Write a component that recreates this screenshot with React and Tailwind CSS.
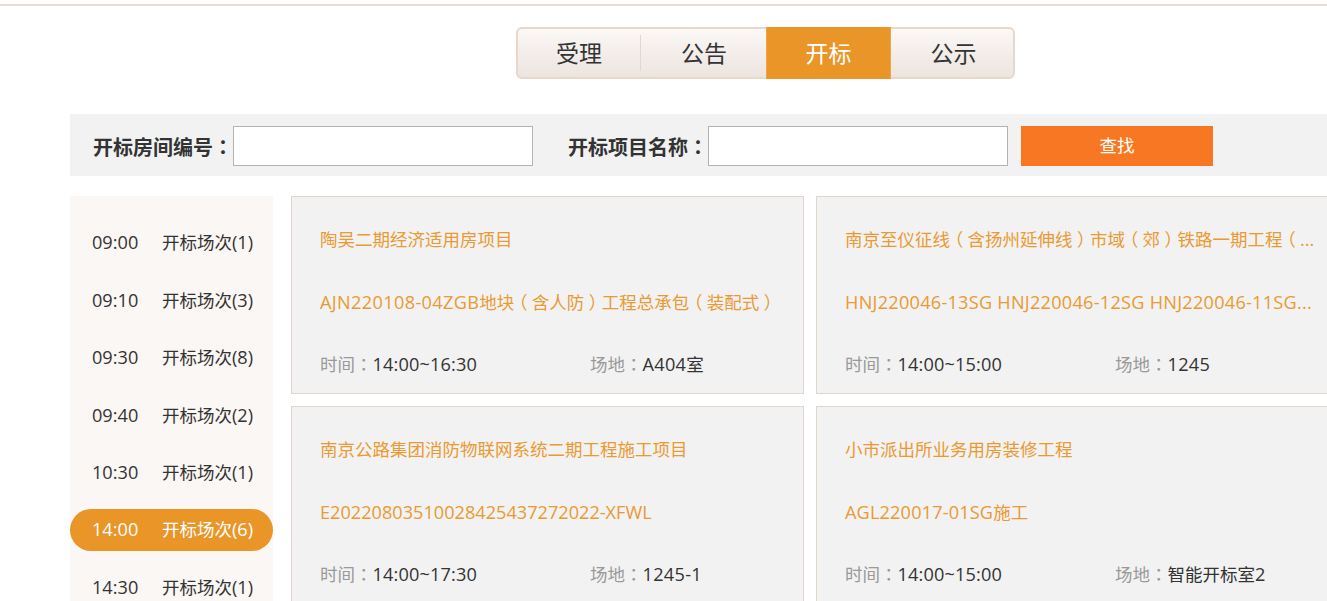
import React from 'react';

const FONT = "font-['Open_Sans','Noto_Sans_CJK_SC',sans-serif]";

const times = [
  { time: '09:00', count: 1 },
  { time: '09:10', count: 3 },
  { time: '09:30', count: 8 },
  { time: '09:40', count: 2 },
  { time: '10:30', count: 1 },
  { time: '14:00', count: 6, active: true },
  { time: '14:30', count: 1 },
];

const cards = [
  {
    name: '陶吴二期经济适用房项目',
    code: 'AJN220108-04ZGB地块（含人防）工程总承包（装配式）',
    codeClass: 'tracking-[0.35px]',
    time: '14:00~16:30',
    place: 'A404室',
  },
  {
    name: '南京至仪征线（含扬州延伸线）市域（郊）铁路一期工程（...',
    code: 'HNJ220046-13SG HNJ220046-12SG HNJ220046-11SG...',
    codeClass: 'tracking-[0.25px]',
    time: '14:00~15:00',
    place: '1245',
  },
  {
    name: '南京公路集团消防物联网系统二期工程施工项目',
    code: 'E20220803510028425437272022-XFWL',
    time: '14:00~17:30',
    place: '1245-1',
  },
  {
    name: '小市派出所业务用房装修工程',
    code: 'AGL220017-01SG施工',
    codeClass: 'tracking-[0.15px]',
    time: '14:00~15:00',
    place: '智能开标室2',
  },
];

// latin runs sit a bit larger than the CJK in the shot, and the brackets are centred in their cell
const Mix = ({ text, latinClass = '' }) =>
  text.split(/([\x00-\x7f]+|（|）|：)/).map((part, i) => {
    if (!part) return null;
    if (part === '（' || part === '）') {
      return (
        <span key={i} className="px-[0.25em] [font-feature-settings:'halt']">
          {part}
        </span>
      );
    }
    if (part === '：') return <span key={i} className="font-['Noto_Sans_CJK_TC',sans-serif]">{part}</span>;
    if (/^[\x00-\x7f]+$/.test(part)) return <span key={i} className={`text-[18.15px] ${latinClass}`}>{part}</span>;
    return part;
  });

const Tab = ({ label, className }) => (
  <div className={`relative flex items-center justify-center text-[23px] ${className}`}>{label}</div>
);

const Card = ({ name, code, codeClass, time, place }) => (
  <div className="h-[198px] w-[513px] border border-[#e2d5cc] bg-[#f2f2f2] pt-[30px] pl-[28px] pr-[14px]">
    <div className="h-[25px] whitespace-nowrap text-[17.5px] leading-[25px] text-[#ea9a33]"><Mix text={name} /></div>
    <div className="mt-[38px] h-[25px] whitespace-nowrap text-[17.5px] leading-[25px] text-[#ea9a33]"><Mix text={code} latinClass={codeClass} /></div>
    <div className="mt-[36px] flex h-[25px] text-[17.5px] leading-[25px] text-[#333]">
      <div className="w-[270px]">
        <span className="text-[#999]"><Mix text="时间：" /></span>
        <Mix text={time} latinClass="tracking-[0.15px]" />
      </div>
      <div>
        <span className="text-[#999]"><Mix text="场地：" /></span>
        <Mix text={place} latinClass="tracking-[0.3px]" />
      </div>
    </div>
  </div>
);

export default function App() {
  return (
    <div className={`h-[601px] overflow-hidden bg-white ${FONT}`}>
      <div className="mt-[4px] h-[2px] bg-[#e8dcd4]" />

      <div className="mt-[21px] ml-[516px] flex h-[52px] w-[499px] rounded-[6px] border-2 border-[#e8d8cc] bg-gradient-to-b from-[#fbf8f6] to-[#ece4df] text-[#333]">
        <Tab label="受理" className="w-[122px]" />
        <div className="my-[6px] w-px bg-[#e3d6cd]" />
        <Tab label="公告" className="w-[125px] pl-[1px]" />
        <Tab label="开标" className="-my-[2px] w-[125px] border-x border-[#eba646] bg-[#e99528] text-white" />
        <Tab label="公示" className="w-[122px] pl-[3px]" />
      </div>

      <div className="mt-[35px] ml-[70px] flex h-[62px] w-[1257px] items-center bg-[#f2f2f2] pl-[23px]">
        <label className="mt-[4px] w-[140px] text-[20px] font-bold text-[#333]">
          <Mix text="开标房间编号：" />
        </label>
        <input className="mt-[2px] h-[40px] w-[300px] border border-[#b3b3b3] bg-white" />
        <label className="mt-[4px] ml-[35px] w-[140px] text-[20px] font-bold text-[#333]">
          <Mix text="开标项目名称：" />
        </label>
        <input className="mt-[2px] h-[40px] w-[300px] border border-[#b3b3b3] bg-white" />
        <button className="mt-[2px] ml-[13px] h-[40px] w-[192px] bg-[#f87722] pb-[2px] text-[17.5px] text-white">查找</button>
      </div>

      <div className="mt-[20px] ml-[70px] flex items-start">
        <div className="h-[420px] w-[203px] shrink-0 bg-[#fbf7f5] pt-[26px]">
          {times.map((t) => (
            <div
              key={t.time}
              className={`mb-[15.4px] flex h-[42px] items-center rounded-[21px] pl-[22px] text-[17.5px] ${
                t.active ? 'bg-[#e99528] text-white' : 'text-[#333]'
              }`}
            >
              <span className="w-[70px]"><Mix text={t.time} /></span>
              <span><Mix text={`开标场次(${t.count})`} /></span>
            </div>
          ))}
        </div>
        <div className="ml-[18px] grid w-[1038px] shrink-0 grid-cols-[513px_513px] content-start gap-[12px]">
          {cards.map((c) => (
            <Card key={c.name} {...c} />
          ))}
        </div>
      </div>
    </div>
  );
}
